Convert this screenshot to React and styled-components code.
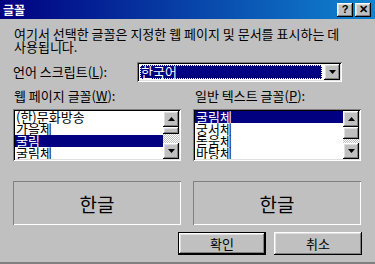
import React from 'react'
import styled, { createGlobalStyle } from 'styled-components'

const GlobalStyle = createGlobalStyle`
  body {
    margin: 0;
    background: #c0c0c0;
  }
  * {
    box-sizing: border-box;
  }
`

const raised = `
  background: #c0c0c0;
  box-shadow: inset -1px -1px #000, inset 1px 1px #fff, inset -2px -2px #808080, inset 2px 2px #dfdfdf;
`

const sunken = `
  box-shadow: inset 1px 1px #808080, inset -1px -1px #fff, inset 2px 2px #000, inset -2px -2px #dfdfdf;
`

const Window = styled.div`
  width: 375px;
  height: 264px;
  display: flex;
  flex-direction: column;
  background: #c0c0c0;
  font-family: "Noto Sans CJK KR", "Noto Sans", sans-serif;
  font-size: 13px;
  color: #000;
  overflow: hidden;
  border-bottom: 2px solid #808080;
`

const TitleBar = styled.div`
  flex: none;
  height: 19px;
  display: flex;
  align-items: center;
  padding: 0 4px 0 3px;
  background: linear-gradient(to right, #000080, #1084d0);
  color: #fff;
  font-weight: bold;
  font-size: 12px;
`

const Title = styled.div`
  flex: 1;
  line-height: 19px;
`

const CaptionButton = styled.div`
  ${raised}
  width: 16px;
  height: 14px;
  margin-left: 2px;
  display: flex;
  align-items: center;
  justify-content: center;
  color: #000;
  font-family: "Liberation Sans", sans-serif;
  font-weight: bold;
  font-size: 11px;
  line-height: 1;
`

const Body = styled.div`
  flex: 1;
  display: flex;
  flex-direction: column;
  padding: 8px 13px 0 13px;
`

const Desc = styled.p`
  margin: 0 0 0 1px;
  line-height: 13px;
`

const LangRow = styled.div`
  display: flex;
  align-items: center;
  margin-top: 9px;
  height: 20px;
`

const Label = styled.div`
  width: ${p => p.width || 'auto'};
  line-height: 14px;
  white-space: nowrap;
`

const Select = styled.div`
  ${sunken}
  width: 205px;
  height: 20px;
  padding: 2px;
  display: flex;
  background: #fff;
`

const SelectValue = styled.div`
  flex: 1;
  margin: 1px 2px 1px 1px;
  padding-left: 1px;
  background: #000080;
  color: #fff;
  line-height: 14px;
  outline: 1px dotted #fff;
  outline-offset: -1px;
`

const ArrowButton = styled.div`
  ${raised}
  width: 16px;
  height: 16px;
  flex: none;
  display: flex;
  align-items: center;
  justify-content: center;
`

const Columns = styled.div`
  display: grid;
  grid-template-columns: 168px 168px;
  column-gap: 12px;
  margin-top: ${p => p.gap || 0}px;
`

const Field = styled.div`
  display: flex;
  flex-direction: column;
`

const ListLabel = styled(Label)`
  margin: 7px 0 6px ${p => p.indent || 0}px;
`

const ListBox = styled.div`
  ${sunken}
  height: 52px;
  padding: 2px;
  display: flex;
  background: #fff;
`

const Items = styled.div`
  flex: 1;
  overflow: hidden;
`

const Item = styled.div`
  height: 12px;
  line-height: 12px;
  padding-left: 1px;
  white-space: nowrap;
  background: ${p => (p.selected ? '#000080' : 'transparent')};
  color: ${p => (p.selected ? '#fff' : '#000')};
`

const ScrollBar = styled.div`
  width: 16px;
  flex: none;
  display: flex;
  flex-direction: column;
`

const Track = styled.div`
  flex: 1;
  background: repeating-conic-gradient(#c0c0c0 0 25%, #fff 0 50%) 0 0 / 2px 2px;
`

const Thumb = styled.div`
  ${raised}
  height: ${p => p.size}px;
`

const Preview = styled.div`
  height: 44px;
  display: flex;
  align-items: center;
  justify-content: center;
  box-shadow: inset 1px 1px #808080, inset -1px -1px #fff;
  font-size: 19px;
  color: #000;
`

const ButtonRow = styled.div`
  display: flex;
  justify-content: flex-end;
  gap: 8px;
  margin-top: 7px;
`

const Button = styled.div`
  ${raised}
  width: 88px;
  height: 23px;
  display: flex;
  align-items: center;
  justify-content: center;
  line-height: 1;
  ${p =>
    p.primary &&
    `box-shadow: inset 0 0 0 1px #000, inset -2px -2px #000, inset 2px 2px #fff, inset -3px -3px #808080, inset 3px 3px #dfdfdf;`}
`

const Arrow = ({ up }) => (
  <svg width="7" height="4" viewBox="0 0 7 4" style={{ transform: up ? 'rotate(180deg)' : 'none' }}>
    <path d="M0 0h7L3.5 4z" fill="#000" />
  </svg>
)

const FontList = ({ items, selected, thumb }) => (
  <ListBox>
    <Items>
      {items.map(name => (
        <Item key={name} selected={name === selected}>
          {name}
        </Item>
      ))}
    </Items>
    <ScrollBar>
      <ArrowButton>
        <Arrow up />
      </ArrowButton>
      <Track>
        <Thumb size={thumb} />
      </Track>
      <ArrowButton>
        <Arrow />
      </ArrowButton>
    </ScrollBar>
  </ListBox>
)

export default function App() {
  return (
    <>
      <GlobalStyle />
      <Window>
        <TitleBar>
          <Title>글꼴</Title>
          <CaptionButton>?</CaptionButton>
          <CaptionButton>✕</CaptionButton>
        </TitleBar>
        <Body>
          <Desc>
            여기서 선택한 글꼴은 지정한 웹 페이지 및 문서를 표시하는 데
            <br />
            사용됩니다.
          </Desc>
          <LangRow>
            <Label width="124px">
              언어 스크립트(<u>L</u>):
            </Label>
            <Select>
              <SelectValue>한국어</SelectValue>
              <ArrowButton>
                <Arrow />
              </ArrowButton>
            </Select>
          </LangRow>
          <Columns>
            <Field>
              <ListLabel indent={1}>
                웹 페이지 글꼴(<u>W</u>):
              </ListLabel>
              <FontList items={['(한)문화방송', '가을체', '굴림', '굴림체']} selected="굴림" thumb={7} />
            </Field>
            <Field>
              <ListLabel indent={2}>
                일반 텍스트 글꼴(<u>P</u>):
              </ListLabel>
              <FontList items={['굴림체', '궁서체', '돋움체', '바탕체']} selected="굴림체" thumb={12} />
            </Field>
          </Columns>
          <Columns gap={20}>
            <Preview>한글</Preview>
            <Preview>한글</Preview>
          </Columns>
          <ButtonRow>
            <Button primary>확인</Button>
            <Button>취소</Button>
          </ButtonRow>
        </Body>
      </Window>
    </>
  )
}
